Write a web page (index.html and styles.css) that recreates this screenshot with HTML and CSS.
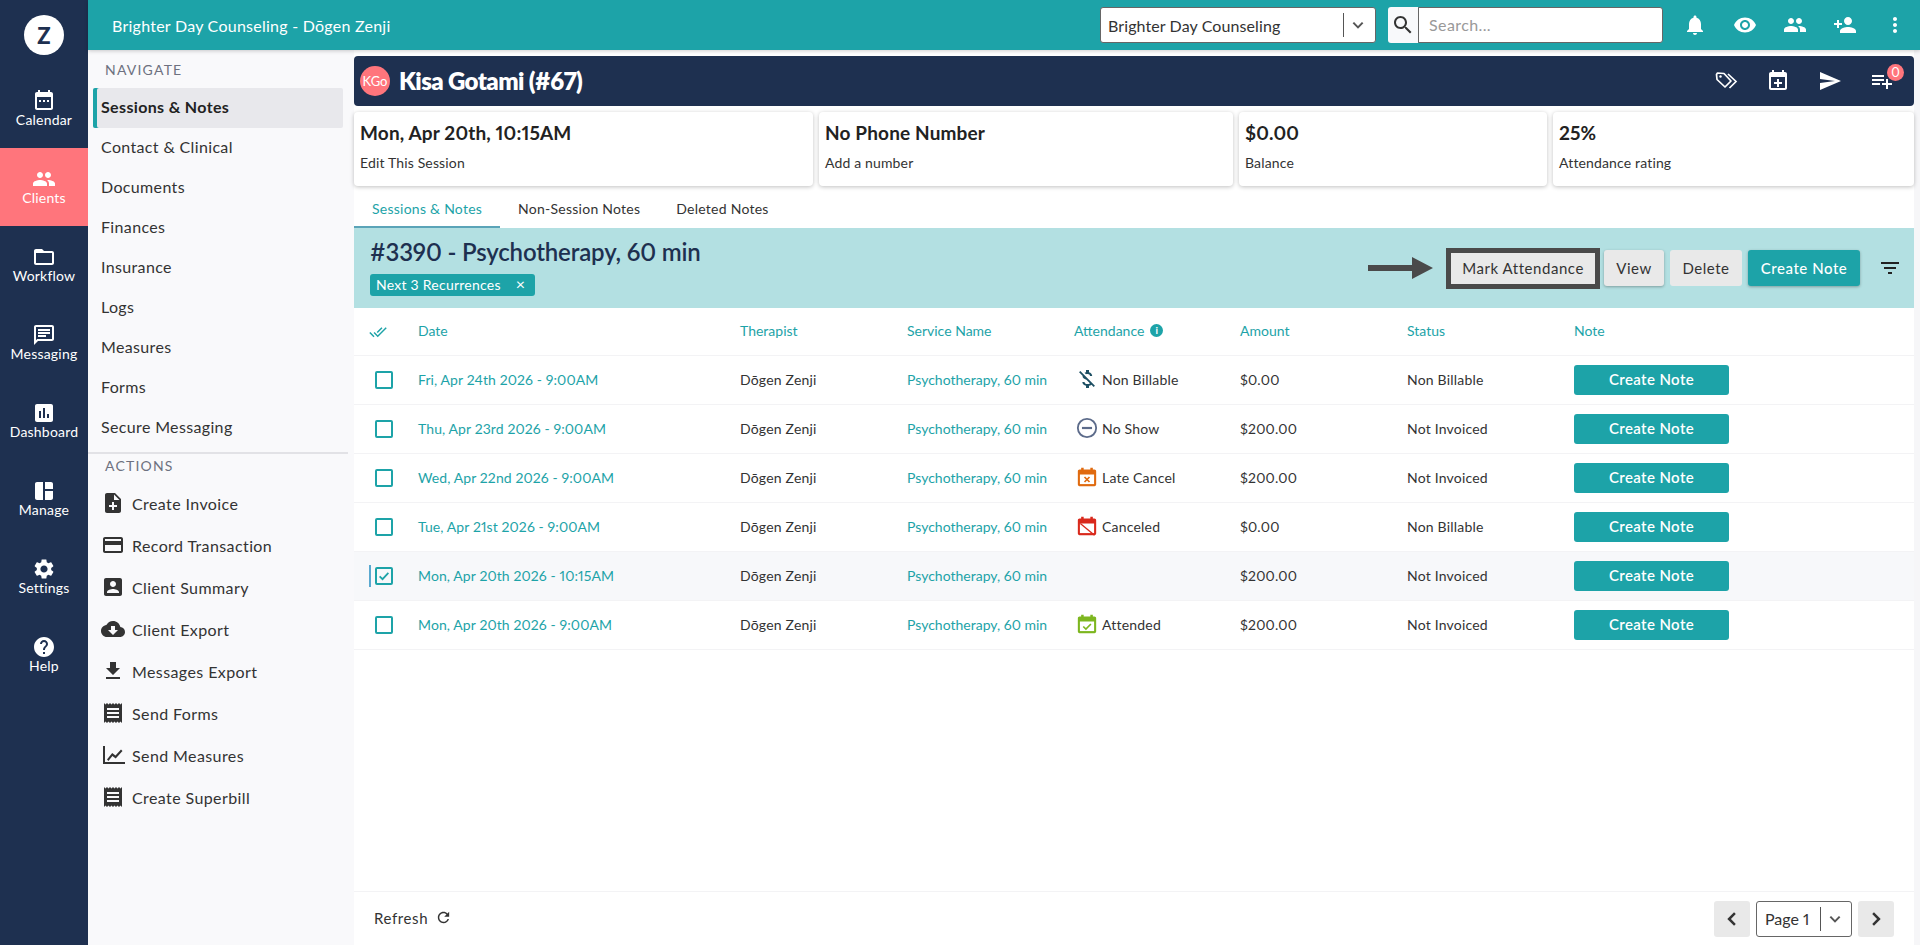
FILE: index.html
```html
<!DOCTYPE html>
<html lang="en">
<head>
	<meta charset="UTF-8">
	<title>Kisa Gotami - Sessions &amp; Notes</title>
	<link rel="stylesheet" href="styles.css">
</head>
<body>
	<svg class="sprite" xmlns="http://www.w3.org/2000/svg">
		<symbol id="i-calendar" viewBox="0 0 24 24"><path d="M19 3h-1V1h-2v2H8V1H6v2H5c-1.11 0-2 .9-2 2v14c0 1.1.89 2 2 2h14c1.1 0 2-.9 2-2V5c0-1.1-.9-2-2-2zm0 16H5V8h14v11z"/><path d="M7 11h2v2H7zm4 0h2v2h-2zm4 0h2v2h-2z"/></symbol>
		<symbol id="i-people" viewBox="0 0 24 24"><path d="M16 11c1.66 0 2.99-1.34 2.99-3S17.66 5 16 5c-1.66 0-3 1.34-3 3s1.34 3 3 3zm-8 0c1.66 0 2.99-1.34 2.99-3S9.66 5 8 5C6.34 5 5 6.34 5 8s1.34 3 3 3zm0 2c-2.33 0-7 1.17-7 3.5V19h14v-2.5c0-2.33-4.67-3.5-7-3.5zm8 0c-.29 0-.62.02-.97.05 1.16.84 1.97 1.97 1.97 3.45V19h6v-2.5c0-2.33-4.67-3.5-7-3.5z"/></symbol>
		<symbol id="i-folder" viewBox="0 0 24 24"><path d="M20 6h-8l-2-2H4c-1.1 0-1.99.9-1.99 2L2 18c0 1.1.9 2 2 2h16c1.1 0 2-.9 2-2V8c0-1.1-.9-2-2-2zm0 12H4V8h16v10z"/></symbol>
		<symbol id="i-message" viewBox="0 0 24 24"><path d="M20 2H4c-1.1 0-1.99.9-1.99 2L2 22l4-4h14c1.1 0 2-.9 2-2V4c0-1.1-.9-2-2-2zm0 14H5.17L4 17.17V4h16v12zM6 12h8v2H6zm0-3h12v2H6zm0-3h12v2H6z"/></symbol>
		<symbol id="i-chart" viewBox="0 0 24 24"><path d="M19 3H5c-1.1 0-2 .9-2 2v14c0 1.1.9 2 2 2h14c1.1 0 2-.9 2-2V5c0-1.1-.9-2-2-2zM9 17H7v-7h2v7zm4 0h-2V7h2v10zm4 0h-2v-4h2v4z"/></symbol>
		<symbol id="i-manage" viewBox="0 0 24 24"><path d="M3 21h8V3H5c-1.1 0-2 .9-2 2v14c0 1.1.9 2 2 2zm10 0h6c1.1 0 2-.9 2-2v-7h-8v9zm0-11h8V5c0-1.1-.9-2-2-2h-6v7z"/></symbol>
		<symbol id="i-settings" viewBox="0 0 24 24"><path d="M19.14 12.94c.04-.3.06-.61.06-.94 0-.32-.02-.64-.07-.94l2.03-1.58c.18-.14.23-.41.12-.61l-1.92-3.32c-.12-.22-.37-.29-.59-.22l-2.39.96c-.5-.38-1.03-.7-1.62-.94l-.36-2.54c-.04-.24-.24-.41-.48-.41h-3.84c-.24 0-.43.17-.47.41l-.36 2.54c-.59.24-1.13.57-1.62.94l-2.39-.96c-.22-.08-.47 0-.59.22L2.74 8.87c-.12.21-.08.47.12.61l2.03 1.58c-.05.3-.09.63-.09.94s.02.64.07.94l-2.03 1.58c-.18.14-.23.41-.12.61l1.92 3.32c.12.22.37.29.59.22l2.39-.96c.5.38 1.03.7 1.62.94l.36 2.54c.05.24.24.41.48.41h3.84c.24 0 .44-.17.47-.41l.36-2.54c.59-.24 1.13-.56 1.62-.94l2.39.96c.22.08.47 0 .59-.22l1.92-3.32c.12-.22.07-.47-.12-.61l-2.01-1.58zM12 15.6c-1.98 0-3.6-1.62-3.6-3.6s1.62-3.6 3.6-3.6 3.6 1.62 3.6 3.6-1.62 3.6-3.6 3.6z"/></symbol>
		<symbol id="i-help" viewBox="0 0 24 24"><path d="M12 2C6.48 2 2 6.48 2 12s4.48 10 10 10 10-4.48 10-10S17.52 2 12 2zm1 17h-2v-2h2v2zm2.07-7.75l-.9.92C13.45 12.9 13 13.5 13 15h-2v-.5c0-1.1.45-2.1 1.17-2.83l1.24-1.26c.37-.36.59-.86.59-1.41 0-1.1-.9-2-2-2s-2 .9-2 2H8c0-2.21 1.79-4 4-4s4 1.79 4 4c0 .88-.36 1.68-.93 2.25z"/></symbol>
		<symbol id="i-note-add" viewBox="0 0 24 24"><path d="M14 2H6c-1.1 0-1.99.9-1.99 2L4 20c0 1.1.89 2 1.99 2H18c1.1 0 2-.9 2-2V8l-6-6zm2 14h-3v3h-2v-3H8v-2h3v-3h2v3h3v2zm-3-7V3.5L18.5 9H13z"/></symbol>
		<symbol id="i-card" viewBox="0 0 24 24"><path d="M20 4H4c-1.11 0-1.99.89-1.99 2L2 18c0 1.11.89 2 2 2h16c1.11 0 2-.89 2-2V6c0-1.11-.89-2-2-2zm0 14H4v-6h16v6zm0-10H4V6h16v2z"/></symbol>
		<symbol id="i-account" viewBox="0 0 24 24"><path d="M3 5v14c0 1.1.89 2 2 2h14c1.1 0 2-.9 2-2V5c0-1.1-.9-2-2-2H5c-1.11 0-2 .9-2 2zm12 4c0 1.66-1.34 3-3 3s-3-1.34-3-3 1.34-3 3-3 3 1.34 3 3zm-9 8c0-2 4-3.1 6-3.1s6 1.1 6 3.1v1H6v-1z"/></symbol>
		<symbol id="i-cloud" viewBox="0 0 24 24"><path d="M19.35 10.04C18.67 6.59 15.64 4 12 4 9.11 4 6.6 5.64 5.35 8.04 2.34 8.36 0 10.91 0 14c0 3.31 2.69 6 6 6h13c2.76 0 5-2.24 5-5 0-2.64-2.05-4.78-4.65-4.96zM17 13l-5 5-5-5h3V9h4v4h3z"/></symbol>
		<symbol id="i-download" viewBox="0 0 24 24"><path d="M19 9h-4V3H9v6H5l7 7 7-7zM5 18v2h14v-2H5z"/></symbol>
		<symbol id="i-receipt" viewBox="0 0 24 24"><path d="M18 17H6v-2h12v2zm0-4H6v-2h12v2zm0-4H6V7h12v2zM3 22l1.5-1.5L6 22l1.5-1.5L9 22l1.5-1.5L12 22l1.5-1.5L15 22l1.5-1.5L18 22l1.5-1.5L21 22V2l-1.5 1.5L18 2l-1.5 1.5L15 2l-1.5 1.5L12 2l-1.5 1.5L9 2 7.5 3.5 6 2 4.5 3.5 3 2v20z"/></symbol>
		<symbol id="i-timeline" viewBox="0 0 24 24"><path d="M2 3h2v16h20v2H2z"/><path d="M6 16.5l1.4 1.4 4-5 3.3 2.6L21.5 8 20 6.600l-5.500 6-3.300-2.600z"/></symbol>
		<symbol id="i-bell" viewBox="0 0 24 24"><path d="M12 22c1.1 0 2-.9 2-2h-4c0 1.1.89 2 2 2zm6-6v-5c0-3.07-1.64-5.64-4.5-6.32V4c0-.83-.67-1.5-1.5-1.5s-1.5.67-1.5 1.5v.68C7.630 5.360 6 7.920 6 11v5l-2 2v1h16v-1l-2-2z"/></symbol>
		<symbol id="i-eye" viewBox="0 0 24 24"><path d="M12 4.500C7 4.500 2.730 7.610 1 12c1.730 4.390 6 7.500 11 7.500s9.270-3.110 11-7.500c-1.730-4.390-6-7.500-11-7.500zM12 17c-2.760 0-5-2.240-5-5s2.240-5 5-5 5 2.240 5 5-2.240 5-5 5zm0-8c-1.660 0-3 1.340-3 3s1.340 3 3 3 3-1.340 3-3-1.340-3-3-3z"/></symbol>
		<symbol id="i-person-add" viewBox="0 0 24 24"><path d="M15 12c2.210 0 4-1.790 4-4s-1.790-4-4-4-4 1.790-4 4 1.790 4 4 4zm-9-2V7H4v3H1v2h3v3h2v-3h3v-2H6zm9 4c-2.670 0-8 1.340-8 4v2h16v-2c0-2.660-5.330-4-8-4z"/></symbol>
		<symbol id="i-dots" viewBox="0 0 24 24"><path d="M12 8c1.100 0 2-.9 2-2s-.9-2-2-2-2 .9-2 2 .9 2 2 2zm0 2c-1.100 0-2 .9-2 2s.9 2 2 2 2-.9 2-2-.9-2-2-2zm0 6c-1.100 0-2 .9-2 2s.9 2 2 2 2-.9 2-2-.9-2-2-2z"/></symbol>
		<symbol id="i-search" viewBox="0 0 24 24"><path d="M15.500 14h-.79l-.28-.27C15.410 12.590 16 11.110 16 9.500 16 5.910 13.090 3 9.500 3S3 5.910 3 9.500 5.910 16 9.500 16c1.610 0 3.090-.59 4.230-1.570l.27.28v.79l5 4.990L20.490 19l-4.990-5zm-6 0C7.010 14 5 11.990 5 9.500S7.010 5 9.500 5 14 7.010 14 9.500 11.990 14 9.500 14z"/></symbol>
		<symbol id="i-send" viewBox="0 0 24 24"><path d="M2.010 21L23 12 2.010 3 2 10l15 2-15 2z"/></symbol>
		<symbol id="i-playlist" viewBox="0 0 24 24"><path d="M14 10H2v2h12v-2zm0-4H2v2h12V6zm4 8v-4h-2v4h-4v2h4v4h2v-4h4v-2h-4zM2 16h8v-2H2v2z"/></symbol>
		<symbol id="i-event-add" viewBox="0 0 24 24"><path d="M19 3h-1V1h-2v2H8V1H6v2H5c-1.110 0-2 .9-2 2v14c0 1.100.89 2 2 2h14c1.100 0 2-.9 2-2V5c0-1.100-.9-2-2-2zm0 16H5V8h14v11z"/><path d="M11 10h2v3h3v2h-3v3h-2v-3H8v-2h3z"/></symbol>
		<symbol id="i-tags" viewBox="0 0 24 24"><path fill="none" stroke="currentColor" stroke-width="1.700" stroke-linejoin="round" d="M2.500 5.500l1-1.500 6.500.5 7 7.500-6 6-8-7.500z"/><path fill="none" stroke="currentColor" stroke-width="1.700" d="M14 5l8 7.500-6.500 6.500"/><circle cx="6.500" cy="7.500" r="1.200"/></symbol>
		<symbol id="i-refresh" viewBox="0 0 24 24"><path d="M17.650 6.350C16.200 4.900 14.210 4 12 4c-4.420 0-7.990 3.580-7.990 8s3.570 8 7.990 8c3.730 0 6.840-2.550 7.730-6h-2.080c-.82 2.330-3.040 4-5.650 4-3.310 0-6-2.690-6-6s2.690-6 6-6c1.660 0 3.140.69 4.220 1.780L13 11h7V4l-2.350 2.350z"/></symbol>
		<symbol id="i-money-off" viewBox="0 0 24 24"><path d="M12.500 6.900c1.780 0 2.440.85 2.500 2.100h2.210c-.07-1.720-1.120-3.300-3.210-3.810V3h-3v2.160c-.53.12-1.030.3-1.480.54l1.470 1.470c.41-.17.91-.27 1.510-.27zM5.330 4.060L4.060 5.330 7.500 8.770c0 2.080 1.560 3.210 3.910 3.910l3.510 3.510c-.34.48-1.050.91-2.420.91-2.060 0-2.870-.92-2.980-2.100h-2.200c.12 2.190 1.760 3.420 3.680 3.830V21h3v-2.150c.96-.18 1.820-.55 2.450-1.120l2.220 2.220 1.270-1.270L5.330 4.060z"/></symbol>
		<symbol id="i-filter" viewBox="0 0 24 24"><path d="M10 18h4v-2h-4v2zM3 6v2h18V6H3zm3 7h12v-2H6v2z"/></symbol>
		<symbol id="i-done-all" viewBox="0 0 24 24"><path d="M18 7l-1.410-1.410-6.340 6.340 1.410 1.410L18 7zm4.240-1.410L11.660 16.170 7.480 12l-1.410 1.410L11.660 19l12-12-1.420-1.410zM.41 13.410L5.990 19l1.410-1.410L1.830 12 .41 13.410z"/></symbol>
		<symbol id="i-chev-down" viewBox="0 0 24 24"><path fill="none" stroke="currentColor" stroke-width="3" d="M5 8.500l7 7 7-7"/></symbol>
		<symbol id="i-chev-left" viewBox="0 0 24 24"><path fill="none" stroke="currentColor" stroke-width="3" d="M15.500 5l-7 7 7 7"/></symbol>
		<symbol id="i-chev-right" viewBox="0 0 24 24"><path fill="none" stroke="currentColor" stroke-width="3" d="M8.500 5l7 7-7 7"/></symbol>
		<symbol id="i-no-show" viewBox="0 0 24 24"><circle cx="12" cy="12" r="10" fill="none" stroke="currentColor" stroke-width="2"/><path d="M6.500 10.800h11v2.400h-11z"/></symbol>
		<symbol id="i-late" viewBox="0 0 24 24"><path d="M5 1h3v2h8V1h3v2h2c1 0 2 1 2 2v16c0 1-1 2-2 2H3c-1 0-2-1-2-2V5c0-1 1-2 2-2h2z"/><path fill="#fff" d="M3.500 9h17v11.500h-17z"/><path fill="none" stroke="currentColor" stroke-width="2" d="M9 12l6 6m0-6l-6 6"/></symbol>
		<symbol id="i-canceled" viewBox="0 0 24 24"><path d="M5 1h3v2h8V1h3v2h2c1 0 2 1 2 2v16c0 1-1 2-2 2H3c-1 0-2-1-2-2V5c0-1 1-2 2-2h2z"/><path fill="#fff" d="M3.500 9h17v11.500h-17z"/><path fill="none" stroke="currentColor" stroke-width="1.600" d="M4 9l17 14"/></symbol>
		<symbol id="i-attended" viewBox="0 0 24 24"><path d="M5 1h3v2h8V1h3v2h2c1 0 2 1 2 2v16c0 1-1 2-2 2H3c-1 0-2-1-2-2V5c0-1 1-2 2-2h2z"/><path fill="#fff" d="M3.500 9h17v11.500h-17z"/><path fill="none" stroke="currentColor" stroke-width="2" d="M7.500 15l3.200 3 6-6"/></symbol>
		<symbol id="i-check" viewBox="0 0 24 24"><path fill="none" stroke="currentColor" stroke-width="3" d="M4.500 12.500l5 5 10-11"/></symbol>
	</svg>

	<div class="app">
		<nav class="rail">
			<div class="logo-row"><span class="logo">Z</span></div>
			<a class="rail-item"><svg class="icon"><use href="#i-calendar"/></svg>Calendar</a>
			<a class="rail-item active"><svg class="icon"><use href="#i-people"/></svg>Clients</a>
			<a class="rail-item"><svg class="icon"><use href="#i-folder"/></svg>Workflow</a>
			<a class="rail-item"><svg class="icon"><use href="#i-message"/></svg>Messaging</a>
			<a class="rail-item"><svg class="icon"><use href="#i-chart"/></svg>Dashboard</a>
			<a class="rail-item"><svg class="icon"><use href="#i-manage"/></svg>Manage</a>
			<a class="rail-item"><svg class="icon"><use href="#i-settings"/></svg>Settings</a>
			<a class="rail-item"><svg class="icon"><use href="#i-help"/></svg>Help</a>
		</nav>

		<div class="wrap">
			<header class="topbar">
				<div class="practice">Brighter Day Counseling - Dōgen Zenji</div>
				<div class="select top-select">
					<span class="select-text">Brighter Day Counseling</span>
					<svg class="icon chev"><use href="#i-chev-down"/></svg>
				</div>
				<div class="search-btn"><svg class="icon"><use href="#i-search"/></svg></div>
				<div class="search-input">Search...</div>
				<div class="top-icons">
					<svg class="icon"><use href="#i-bell"/></svg>
					<svg class="icon"><use href="#i-eye"/></svg>
					<svg class="icon"><use href="#i-people"/></svg>
					<svg class="icon"><use href="#i-person-add"/></svg>
					<svg class="icon"><use href="#i-dots"/></svg>
				</div>
			</header>

			<div class="below">
				<aside class="subnav">
					<div class="nav-label">NAVIGATE</div>
					<a class="nav-item active">Sessions &amp; Notes</a>
					<a class="nav-item">Contact &amp; Clinical</a>
					<a class="nav-item">Documents</a>
					<a class="nav-item">Finances</a>
					<a class="nav-item">Insurance</a>
					<a class="nav-item">Logs</a>
					<a class="nav-item">Measures</a>
					<a class="nav-item">Forms</a>
					<a class="nav-item">Secure Messaging</a>
					<div class="nav-divider"></div>
					<div class="nav-label small">ACTIONS</div>
					<div class="actions">
						<a class="action"><svg class="icon"><use href="#i-note-add"/></svg>Create Invoice</a>
						<a class="action"><svg class="icon"><use href="#i-card"/></svg>Record Transaction</a>
						<a class="action"><svg class="icon"><use href="#i-account"/></svg>Client Summary</a>
						<a class="action"><svg class="icon"><use href="#i-cloud"/></svg>Client Export</a>
						<a class="action"><svg class="icon"><use href="#i-download"/></svg>Messages Export</a>
						<a class="action"><svg class="icon"><use href="#i-receipt"/></svg>Send Forms</a>
						<a class="action"><svg class="icon"><use href="#i-timeline"/></svg>Send Measures</a>
						<a class="action"><svg class="icon"><use href="#i-receipt"/></svg>Create Superbill</a>
					</div>
				</aside>

				<main class="main">
					<div class="client-bar">
						<span class="avatar">KGo</span>
						<h1 class="client-name">Kisa Gotami (#67)</h1>
						<div class="client-icons">
							<svg class="icon"><use href="#i-tags"/></svg>
							<svg class="icon"><use href="#i-event-add"/></svg>
							<svg class="icon"><use href="#i-send"/></svg>
							<span class="badge-wrap"><svg class="icon"><use href="#i-playlist"/></svg><span class="badge">0</span></span>
						</div>
					</div>

					<div class="cards">
						<div class="card"><div class="card-title">Mon, Apr 20th, 10:15AM</div><div class="card-sub">Edit This Session</div></div>
						<div class="card"><div class="card-title">No Phone Number</div><div class="card-sub">Add a number</div></div>
						<div class="card"><div class="card-title">$0.00</div><div class="card-sub">Balance</div></div>
						<div class="card"><div class="card-title">25%</div><div class="card-sub">Attendance rating</div></div>
					</div>

					<div class="tabs">
						<a class="tab active">Sessions &amp; Notes</a>
						<a class="tab">Non-Session Notes</a>
						<a class="tab">Deleted Notes</a>
					</div>

					<div class="band">
						<div class="band-left">
							<h2 class="band-title">#3390 - Psychotherapy, 60 min</h2>
							<span class="pill">Next 3 Recurrences <span class="pill-x">×</span></span>
						</div>
						<div class="band-actions">
							<svg class="arrow" viewBox="0 0 65 22"><path fill="#4a4a4a" d="M0 8h44V0l21 11-21 11v-8H0z"/></svg>
							<button class="mark-btn">Mark Attendance</button>
							<button class="btn grey shadow view">View</button>
							<button class="btn grey delete">Delete</button>
							<button class="btn teal shadow create">Create Note</button>
							<svg class="icon filter"><use href="#i-filter"/></svg>
						</div>
					</div>

					<div class="table">
						<div class="row head">
							<span><svg class="icon all"><use href="#i-done-all"/></svg></span>
							<span>Date</span>
							<span>Therapist</span>
							<span>Service Name</span>
							<span class="att-head">Attendance <i class="info">i</i></span>
							<span>Amount</span>
							<span>Status</span>
							<span>Note</span>
						</div>
						<div class="row">
							<span><i class="check"></i></span>
							<a class="link date">Fri, Apr 24th 2026 - 9:00AM</a>
							<span>Dōgen Zenji</span>
							<a class="link">Psychotherapy, 60 min</a>
							<span class="att"><svg class="icon c-money"><use href="#i-money-off"/></svg>Non Billable</span>
							<span>$0.00</span>
							<span>Non Billable</span>
							<span class="note-cell"><button class="note-btn">Create Note</button></span>
						</div>
						<div class="row">
							<span><i class="check"></i></span>
							<a class="link date">Thu, Apr 23rd 2026 - 9:00AM</a>
							<span>Dōgen Zenji</span>
							<a class="link">Psychotherapy, 60 min</a>
							<span class="att"><svg class="icon c-noshow"><use href="#i-no-show"/></svg>No Show</span>
							<span>$200.00</span>
							<span>Not Invoiced</span>
							<span class="note-cell"><button class="note-btn">Create Note</button></span>
						</div>
						<div class="row">
							<span><i class="check"></i></span>
							<a class="link date">Wed, Apr 22nd 2026 - 9:00AM</a>
							<span>Dōgen Zenji</span>
							<a class="link">Psychotherapy, 60 min</a>
							<span class="att"><svg class="icon c-late"><use href="#i-late"/></svg>Late Cancel</span>
							<span>$200.00</span>
							<span>Not Invoiced</span>
							<span class="note-cell"><button class="note-btn">Create Note</button></span>
						</div>
						<div class="row">
							<span><i class="check"></i></span>
							<a class="link date">Tue, Apr 21st 2026 - 9:00AM</a>
							<span>Dōgen Zenji</span>
							<a class="link">Psychotherapy, 60 min</a>
							<span class="att"><svg class="icon c-cancel"><use href="#i-canceled"/></svg>Canceled</span>
							<span>$0.00</span>
							<span>Non Billable</span>
							<span class="note-cell"><button class="note-btn">Create Note</button></span>
						</div>
						<div class="row current">
							<span><i class="check on"><svg class="icon"><use href="#i-check"/></svg></i></span>
							<a class="link date">Mon, Apr 20th 2026 - 10:15AM</a>
							<span>Dōgen Zenji</span>
							<a class="link">Psychotherapy, 60 min</a>
							<span></span>
							<span>$200.00</span>
							<span>Not Invoiced</span>
							<span class="note-cell"><button class="note-btn">Create Note</button></span>
						</div>
						<div class="row">
							<span><i class="check"></i></span>
							<a class="link date">Mon, Apr 20th 2026 - 9:00AM</a>
							<span>Dōgen Zenji</span>
							<a class="link">Psychotherapy, 60 min</a>
							<span class="att"><svg class="icon c-attended"><use href="#i-attended"/></svg>Attended</span>
							<span>$200.00</span>
							<span>Not Invoiced</span>
							<span class="note-cell"><button class="note-btn">Create Note</button></span>
						</div>
					</div>

					<footer class="foot">
						<a class="refresh">Refresh <svg class="icon"><use href="#i-refresh"/></svg></a>
						<div class="pager">
							<span class="page-arrow"><svg class="icon"><use href="#i-chev-left"/></svg></span>
							<div class="select page-select">
								<span class="select-text">Page 1</span>
								<svg class="icon chev"><use href="#i-chev-down"/></svg>
							</div>
							<span class="page-arrow"><svg class="icon"><use href="#i-chev-right"/></svg></span>
						</div>
					</footer>
				</main>
			</div>
		</div>
	</div>
</body>
</html>
```

FILE: styles.css
```css
* {box-sizing: border-box;}
html, body {margin: 0; height: 100%; overflow: hidden;}
body {font-family: Lato, "Open Sans", sans-serif; font-size: 14px; color: #333; font-variant-numeric: proportional-nums;}
a {color: inherit; text-decoration: none;}
h1, h2 {margin: 0;}
.sprite {display: none;}
.icon {width: 24px; height: 24px; fill: currentColor; flex: none; display: block;}

.app {display: flex; height: 945px;}

/* left rail */
.rail {width: 88px; flex: none; background: #1e3050; color: #fff;}
.logo-row {height: 70px; display: flex; align-items: center; justify-content: center;}
.logo {width: 40px; height: 40px; border-radius: 50%; background: #fff; color: #1e3050; font-size: 22px; font-weight: 900; display: flex; align-items: center; justify-content: center;}
.rail-item {height: 78px; padding-top: 19px; display: flex; flex-direction: column; align-items: center; font-size: 14px; line-height: 14px; letter-spacing: .2px;}
.rail-item.active {background: #ff757c;}

.wrap {flex: 1; min-width: 0; display: flex; flex-direction: column;}

/* top bar */
.topbar {height: 50px; flex: none; background: #1da3a8; color: #fff; display: flex; align-items: center; padding-right: 13px; box-shadow: 0 1px 4px rgba(0,0,0,.2); position: relative;}
.practice {flex: 1; padding-left: 24px; font-size: 16px; letter-spacing: .25px;}
.select {background: #fff; border: 1px solid #666; border-radius: 3px; color: #333; display: flex; align-items: center;}
.select-text {flex: 1; white-space: nowrap;}
.chev {color: #555; border-left: 1px solid #555; width: 29px; height: 24px; padding: 3px 6px;}
.top-select {width: 276px; height: 36px; margin-right: 12px; padding: 0 3px 0 7px; font-size: 16px; letter-spacing: .1px;}
.search-btn {width: 30px; height: 36px; background: #f8f9fb; color: #333; border-radius: 3px 0 0 3px; display: flex; align-items: center; justify-content: center;}
.search-input {width: 245px; height: 36px; background: #fff; border: 1px solid #666; border-radius: 0 3px 3px 0; color: #999; font-size: 16px; line-height: 34px; padding-left: 10px; letter-spacing: .4px;}
.top-icons {display: flex; gap: 26px; margin-left: 20px;}

.below {flex: 1; display: flex; min-height: 0;}

/* second nav */
.subnav {width: 266px; flex: none; background: #f9f9fb; color: #333;}
.nav-label {height: 38px; padding: 9px 0 0 17px; line-height: 22px; font-size: 14px; letter-spacing: 1.2px; color: #6d7180;}
.nav-label.small {height: 24px; padding-top: 1px;}
.nav-item {display: block; height: 40px; line-height: 38px; margin: 0 11px 0 5px; padding-left: 8px; font-size: 16px; border-radius: 2px; letter-spacing: .35px;}
.nav-item.active {background: #e8e8ec; font-weight: 700; color: #222; box-shadow: inset 4px 0 0 #1da3a8;}
.nav-divider {height: 2px; width: 260px; margin-top: 4px; background: #e2e2e6;}
.actions {padding-top: 4px;}
.action {height: 42px; display: flex; align-items: center; gap: 7px; padding-left: 13px; font-size: 16px; letter-spacing: .4px;}

/* main column */
.main {flex: 1; min-width: 0; padding: 6px 6px 0 0; background: #fff; display: flex; flex-direction: column; box-shadow: inset -6px 0 0 #f6f6f8;}
.client-bar {height: 50px; flex: none; background: #1e3050; color: #fff; border-radius: 4px; display: flex; align-items: center; padding: 0 20px 0 6px;}
.avatar {width: 30px; height: 30px; border-radius: 50%; background: #ff757c; font-size: 13px; display: flex; align-items: center; justify-content: center; margin-right: 9px;}
.client-name {flex: 1; font-size: 24px; font-weight: 800; line-height: 30px; letter-spacing: -.6px;}
.client-icons {display: flex; gap: 28px;}
.badge-wrap {position: relative; display: block;}
.badge {position: absolute; left: 17px; top: -5px; width: 17px; height: 17px; border-radius: 50%; background: #ff757c; font-size: 13px; line-height: 17px; text-align: center;}

.cards {display: grid; grid-template-columns: 459px 414px 308px 1fr; gap: 6px; margin-top: 6px; flex: none;}
.card {height: 74px; background: #fff; border-radius: 4px; padding: 9px 6px; box-shadow: 0 1px 4px rgba(0,0,0,.25);}
.card-title {font-size: 19px; line-height: 24px; font-weight: 700; color: #222; letter-spacing: .15px;}
.card-sub {margin-top: 8px; line-height: 20px; font-size: 14px; letter-spacing: .15px;}

.tabs {display: flex; height: 36px; margin-top: 6px; flex: none;}
.tab {padding: 0 18px; line-height: 34px; font-size: 14px; letter-spacing: .25px;}
.tab.active {color: #1da3a8; border-bottom: 2px solid #5ba4b8;}

.band {height: 80px; flex: none; background: #b3e0e2; display: flex; align-items: center; justify-content: space-between; padding: 0 12px 0 16px;}
.band-left {margin-bottom: 4px;}
.band-title {font-size: 24px; font-weight: 600; line-height: 30px; color: #1e3050; letter-spacing: -.17px;}
.pill {display: block; margin-top: 7px; height: 22px; line-height: 20px; width: 165px; padding-left: 6px; background: #1da3a8; color: #fff; border-radius: 3px; font-size: 14px; letter-spacing: .25px;}
.pill-x {margin-left: 11px; font-size: 16px;}
.band-actions {display: flex; align-items: center;}
.arrow {width: 65px; height: 22px; margin-right: 13px;}
.mark-btn {width: 154px; height: 41px; border: 5px solid #4a4a4a; background: #e9e9e9; color: #333; font: 15px Lato, sans-serif; letter-spacing: .55px; margin-right: 4px;}
.btn {height: 36px; border: 0; border-radius: 3px; font: 15px Lato, sans-serif; letter-spacing: .55px;}
.btn.grey {background: #e9e9e9; color: #333;}
.btn.teal {background: #1da3a8; color: #fff; font-weight: 500;}
.btn.shadow {box-shadow: 0 1px 3px rgba(0,0,0,.3);}
.view {width: 60px; margin-right: 6px;}
.delete {width: 72px; margin-right: 6px;}
.create {width: 112px; margin-right: 18px;}
.filter {color: #222;}

/* sessions table */
.table {flex: 1;}
.row {display: grid; grid-template-columns: 64px 322px 167px 167px 166px 167px 167px 1fr; align-items: center; height: 49px; border-bottom: 1px solid #f3f3f5; font-size: 14px; letter-spacing: .2px;}
.row > span, .row > a {padding-bottom: 2px;}
.row > span:first-child, .row > .note-cell {padding-bottom: 0;}
.row.head {height: 48px; color: #1da3a8; letter-spacing: 0;}
.row.current {background: #f7f8fa;}
.row > span:first-child {padding-left: 21px;}
.row.head > span:first-child {padding-left: 15px;}
.link {color: #1da3a8; letter-spacing: 0;}
.link.date {letter-spacing: .1px;}
.all {width: 18px; height: 18px;}
.att-head {display: flex; align-items: center; gap: 6px;}
.info {width: 13px; height: 13px; border-radius: 50%; background: #1da3a8; color: #fff; font: 700 10px/13px Lato, sans-serif; text-align: center;}
.check {display: block; width: 18px; height: 18px; border: 2px solid #1da3a8; border-radius: 2px; position: relative; color: #1da3a8;}
.check .icon {width: 14px; height: 14px;}
.check.on::before {content: ""; position: absolute; left: -8px; top: -4px; width: 2px; height: 22px; background: #5aa9d0;}
.att {display: flex; align-items: center; gap: 4px; margin-left: 2px;}
.att .icon {width: 22px; height: 22px;}
.att .c-money {width: 24px; height: 24px; margin: -1px;}
.c-money {color: #1d4f63;}
.c-noshow {color: #5c6b8a;}
.att .c-late, .att .c-cancel, .att .c-attended {padding: 1px;}
.c-late {color: #e06a0f;}
.c-cancel {color: #d9291c;}
.c-attended {color: #7db61f;}
.note-btn {display: block; width: 155px; height: 30px; padding: 0 0 2px; border: 0; border-radius: 3px; background: #1da3a8; color: #fff; font: 600 15px Lato, sans-serif; letter-spacing: .4px;}

.foot {height: 54px; flex: none; border-top: 1px solid #f3f3f5; display: flex; align-items: center; justify-content: space-between; padding: 0 20px;}
.refresh {display: flex; align-items: center; gap: 7px; font-size: 15px; letter-spacing: .6px; padding-bottom: 2px;}
.refresh .icon {width: 17px; height: 17px;}
.pager {display: flex; gap: 6px;}
.page-arrow {width: 36px; height: 36px; border-radius: 3px; background: #e9e9e9; color: #333; display: flex; align-items: center; justify-content: center;}
.page-arrow .icon {width: 20px; height: 20px;}
.page-select {width: 96px; height: 36px; padding: 0 2px 0 8px; font-size: 16px;}
```
